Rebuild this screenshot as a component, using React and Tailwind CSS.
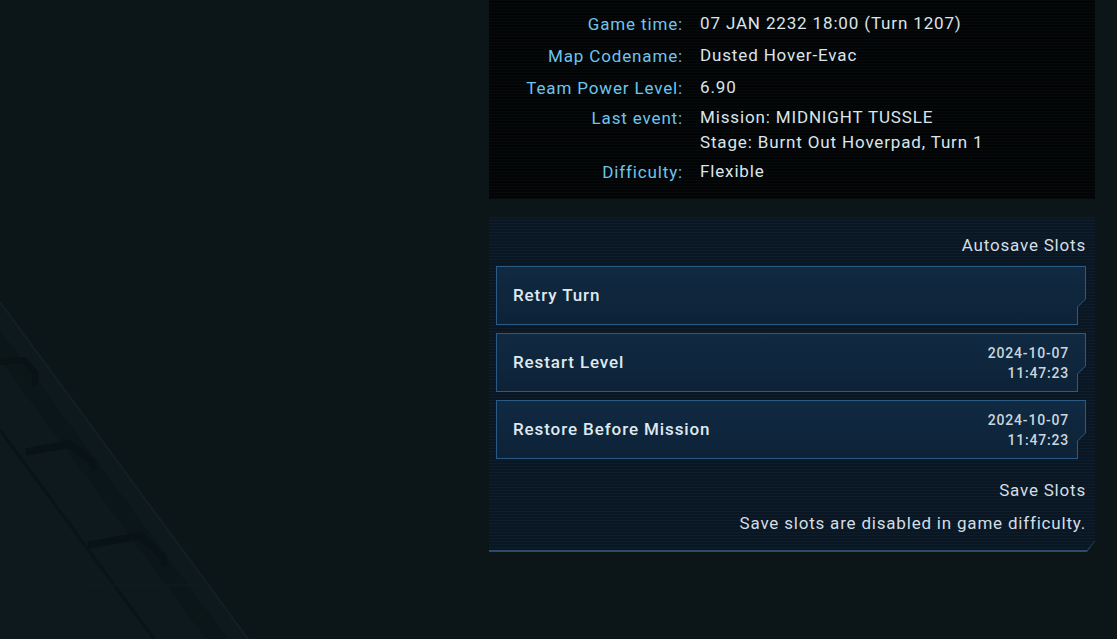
import { Fragment } from 'react'

const info = [
  { label: 'Game time:', value: ['07 JAN 2232 18:00 (Turn 1207)'] },
  { label: 'Map Codename:', value: ['Dusted Hover-Evac'] },
  { label: 'Team Power Level:', value: ['6.90'] },
  { label: 'Last event:', value: ['Mission: MIDNIGHT TUSSLE', 'Stage: Burnt Out Hoverpad, Turn 1'] },
  { label: 'Difficulty:', value: ['Flexible'] },
]

const slots = [
  { name: 'Retry Turn' },
  { name: 'Restart Level', date: '2024-10-07', time: '11:47:23' },
  { name: 'Restore Before Mission', date: '2024-10-07', time: '11:47:23' },
]

function Backdrop() {
  return (
    <svg width="489" height="639" viewBox="0 0 489 639" className="block">
      <polygon points="0,302 248,639 0,639" fill="#0d191c" />
      <polygon points="0,330 228,639 206,639 0,360" fill="#0b1619" />
      <line x1="0" y1="302" x2="248" y2="639" stroke="#122023" strokeWidth="2" />
      <line x1="0" y1="430" x2="154" y2="639" stroke="#0a1416" strokeWidth="3" />
      <line x1="0" y1="480" x2="117" y2="639" stroke="#0f1b1e" strokeWidth="2" />
      <path d="M0 362 L24 360 L36 374 L34 386" fill="none" stroke="#091214" strokeWidth="6" />
      <path d="M26 452 L70 444 L92 462 L95 470" fill="none" stroke="#091214" strokeWidth="7" />
      <path d="M88 545 L140 536 L162 556 L165 566" fill="none" stroke="#091214" strokeWidth="7" />
      <line x1="88" y1="585" x2="200" y2="585" stroke="#0f1f25" strokeWidth="1" />
    </svg>
  )
}

function SlotButton({ slot }) {
  return (
    <div className="bg-[#2b5b82] p-px [clip-path:polygon(0_0,100%_0,100%_33px,calc(100%_-_8px)_41px,calc(100%_-_8px)_100%,0_100%)]">
      <div className="flex h-[57px] items-center justify-between bg-[linear-gradient(180deg,#102a42_0%,#0d2237_100%)] pl-4 pr-4 [clip-path:polygon(0_0,100%_0,100%_32px,calc(100%_-_8px)_40px,calc(100%_-_8px)_100%,0_100%)]">
        <span className="text-[17px] font-medium tracking-[0.9px] text-[#dfe9ef]">{slot.name}</span>
        {slot.date && (
          <div className="text-right text-[14px] font-medium leading-[20px] tracking-[0.8px] text-[#c9d6de]">
            <div>{slot.date}</div>
            <div>{slot.time}</div>
          </div>
        )}
      </div>
    </div>
  )
}

export default function App() {
  return (
    <div className="flex h-[639px] w-full overflow-hidden bg-[#0c1517] font-['Roboto','Liberation_Sans',sans-serif]">
      <div className="w-[489px] shrink-0">
        <Backdrop />
      </div>

      <div className="flex w-[606px] shrink-0 flex-col">
        <div className="h-[199px] bg-[#040708] bg-[repeating-linear-gradient(180deg,#060a0b_0px,#060a0b_1px,#020405_1px,#020405_3px)] pt-[11px]">
          <div className="grid grid-cols-[194px_1fr] gap-x-[17px] text-[17px] tracking-[0.85px]">
            {info.map((row, i) => (
              <Fragment key={row.label}>
                <div className={`text-right leading-[26px] text-[#6ec4ea] ${i > 0 ? (i >= 3 ? 'mt-[4px]' : 'mt-[6px]') : ''}`}>
                  {row.label}
                </div>
                <div className={`leading-[26px] text-[#dbe5ea] ${i > 0 ? (i >= 3 ? 'mt-[4px]' : 'mt-[6px]') : ''}`}>
                  {row.value.map((v) => (
                    <div key={v} className="leading-[25px]">{v}</div>
                  ))}
                </div>
              </Fragment>
            ))}
          </div>
        </div>

        <div className="mt-[18px] h-[335px] bg-[#2b4d6b] [clip-path:polygon(0_0,100%_0,100%_calc(100%_-_11px),calc(100%_-_8px)_100%,0_100%)]">
          <div className="h-[333px] bg-[#0b1825] bg-[repeating-linear-gradient(180deg,#0e1d2c_0px,#0e1d2c_1px,#0a1621_1px,#0a1621_3px)] px-[7px] pt-[17px] [clip-path:polygon(0_0,100%_0,100%_calc(100%_-_10px),calc(100%_-_8px)_100%,0_100%)]">
            <div className="pr-[2px] text-right text-[17px] leading-[22px] tracking-[0.8px] text-[#d3dee5]">Autosave Slots</div>
            <div className="mt-[10px] flex w-[590px] flex-col gap-[8px]">
              {slots.map((s) => (
                <SlotButton key={s.name} slot={s} />
              ))}
            </div>
            <div className="mt-[20px] pr-[2px] text-right text-[17px] leading-[22px] tracking-[0.8px] text-[#d3dee5]">Save Slots</div>
            <div className="mt-[11px] pr-[2px] text-right text-[17px] leading-[22px] tracking-[0.8px] text-[#d3dee5]">
              Save slots are disabled in game difficulty.
            </div>
          </div>
        </div>
      </div>
    </div>
  )
}
